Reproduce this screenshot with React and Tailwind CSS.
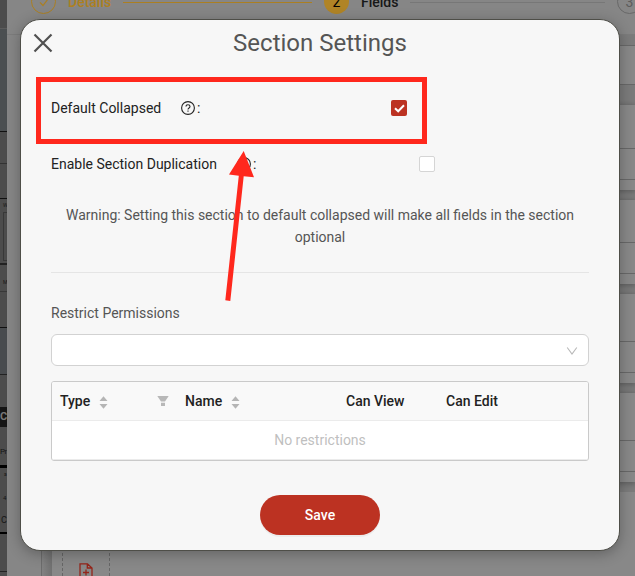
import React from 'react';

function SideStrip() {
  return (
    <div className="flex w-[7px] shrink-0 flex-col overflow-hidden bg-[#4c4c4c] text-[9px] leading-none text-[#161616]">
      <div className="h-[29px] shrink-0 border-b border-[#5c5c5c]" />
      <div className="h-[91px] shrink-0 border-b border-[#4b4f51] bg-[#4b4f51]" />
      <div className="h-3 shrink-0 border-b border-[#111] bg-[#4b4f51]" />
      <div className="h-8 shrink-0 border-b border-[#333]" />
      <div className="h-[35px] shrink-0 border-b border-[#111]" />
      <div className="h-[13px] shrink-0 pl-[3px] pt-1 text-[5px]">W</div>
      <div className="ml-[3px] h-[49px] shrink-0 border border-r-0 border-[#383838]" />
      <div className="mt-[2px] h-[2px] shrink-0 bg-[#222]" />
      <div className="h-[27px] shrink-0 border-b border-[#383838] pl-[3px] pt-[15px] text-[5px]">M</div>
      <div className="h-9 shrink-0 border-b border-[#111]" />
      <div className="h-[47px] shrink-0 border-b border-[#222] bg-[#484b4e]" />
      <div className="mt-8 h-5 shrink-0 bg-[#151515] pt-1 text-[11px] font-bold text-[#777]">C</div>
      <div className="h-[38px] shrink-0 pt-[21px] text-[8px] tracking-[-0.5px]">Pr</div>
      <div className="h-[3px] shrink-0 bg-black" />
      <div className="h-[27px] shrink-0 pl-1 pt-1 text-[5px]">a</div>
      <div className="h-[20px] shrink-0 pl-[3px] text-[6px]">4</div>
      <div className="h-[17px] shrink-0 pl-px pt-[1px]">C</div>
      <div className="h-[2px] shrink-0 bg-black" />
      <div className="h-[38px] shrink-0 border-b border-[#222]" />
    </div>
  );
}

function Stepper() {
  return (
    <div className="-mt-[11px] flex h-[25px] shrink-0 items-center pl-6 text-[14px] font-medium">
      <span className="flex size-[25px] shrink-0 items-center justify-center rounded-full border border-[#ab7f22]">
        <svg className="size-3" viewBox="0 0 12 12" fill="none" stroke="#ab7f22" strokeWidth="1.2">
          <path d="M2 6.3 5 9.5 10 3" />
        </svg>
      </span>
      <span className="ml-3 w-[43px] shrink-0 text-[#ae8020]">Details</span>
      <span className="ml-3 mt-[2px] h-px w-[189px] shrink-0 bg-[#ab7f22]" />
      <span className="ml-3 flex size-[25px] shrink-0 items-center justify-center rounded-full bg-[#b08426] font-normal text-black">2</span>
      <span className="ml-3 w-[38px] shrink-0 text-[#171717]">Fields</span>
      <span className="ml-[11px] mt-[2px] h-px w-[195px] shrink-0 bg-[#777]" />
      <span className="ml-3 flex size-[25px] shrink-0 items-center justify-center rounded-full border border-[#686868] font-normal text-[#5c5c5c]">3</span>
    </div>
  );
}

function FieldCard({ className }) {
  return (
    <div className={'flex shrink-0 flex-col bg-[#888] shadow-[0_1px_5px_1px_rgba(0,0,0,0.22)] ' + className}>
      <div className="flex-1 border-b border-[#686868]" />
      <div className="h-[31px] border-b border-[#686868]" />
      <div className="h-[10px]" />
    </div>
  );
}

function Backdrop() {
  return (
    <div className="flex h-full">
      <SideStrip />
      <div className="flex min-w-0 flex-1 flex-col overflow-hidden bg-[#868686]">
        <Stepper />
        <div className="h-[21px] shrink-0 border-b border-[#7c7c7c]" />
        <div className="flex min-h-0 flex-1">
          <div className="flex w-[35px] shrink-0 border-r border-[#6c6c6c]" />
          <div className="w-[10px] shrink-0 bg-linear-to-r from-[#828282] to-[#707070]" />
          <div className="flex flex-1 items-end bg-[#888] pl-[10px]">
            <div className="flex h-12 w-12 justify-center border-x border-dashed border-[#666] pt-[35px]">
              <svg className="h-[18px] w-[14px] shrink-0" viewBox="0 0 14 18" fill="none" stroke="#94251a" strokeWidth="1.3">
                <path d="M1 .8h7.5L13 5v12H1zM8.3.8V5H13M4 9.5h6M7 6.5v6" />
              </svg>
            </div>
          </div>
          <div className="flex w-[30px] shrink-0 flex-col gap-[10px] overflow-hidden bg-[#7b7b7b]">
            <div className="mt-[10px] h-10 shrink-0 border-y border-[#686868] bg-[#888]" />
            <FieldCard className="mt-[10px] h-[85px]" />
            <FieldCard className="h-[84px]" />
            <FieldCard className="h-[89px]" />
            <FieldCard className="h-[89px]" />
            <div className="flex-1 bg-[#888]" />
          </div>
        </div>
      </div>
    </div>
  );
}

function HelpIcon() {
  return (
    <svg className="size-[14px] shrink-0" viewBox="0 0 14 14" fill="none" stroke="#222" strokeWidth="1.1">
      <circle cx="7" cy="7" r="6.4" />
      <path d="M5 5.6C5 4.4 5.8 3.7 7 3.7s2 .7 2 1.8c0 1.5-2 1.4-2 3" />
      <path d="M7 9.5v1.2" />
    </svg>
  );
}

function Sorter() {
  return (
    <svg className="mt-[3px] h-[13px] w-[9px] shrink-0" viewBox="0 0 9 13" fill="#b5b5b5">
      <path d="M4.5.3 8.5 5H.5zM4.5 12.7.5 8h8z" />
    </svg>
  );
}

function Modal() {
  return (
    <div className="absolute left-5 top-[19px] flex h-[532px] w-[600px] flex-col rounded-[20px] border border-[#4e4e48] bg-[#f7f7f7] px-[30px] shadow-[0_3px_14px_rgba(0,0,0,0.28)]">
      <div className="-mx-[30px] flex h-[46px] shrink-0 items-center">
        <svg className="ml-3 size-5" viewBox="0 0 20 20" fill="none" stroke="#505050" strokeWidth="2.2">
          <path d="m1.5 1.5 17 17M18.5 1.5l-17 17" />
        </svg>
        <h1 className="mr-8 flex-1 text-center text-[24px] text-[#555]">Section Settings</h1>
      </div>
      <div className="mt-[14px] flex h-14 shrink-0 items-center">
        <span className="w-[130px]">Default Collapsed</span>
        <HelpIcon />
        <span className="ml-[2px]">:</span>
        <span className="ml-auto mr-[182px] flex size-4 items-center justify-center rounded-[2px] bg-[#bc3222]">
          <svg className="h-[9px] w-[11px]" viewBox="0 0 11 9" fill="none" stroke="#fff" strokeWidth="2">
            <path d="M1 4.2 4.2 7.3 10 1.2" />
          </svg>
        </span>
      </div>
      <div className="flex h-14 shrink-0 items-center">
        <span className="w-[186px]">Enable Section Duplication</span>
        <HelpIcon />
        <span className="ml-[2px]">:</span>
        <span className="ml-auto mr-[154px] size-4 rounded-[2px] border border-[#d5d5d5] bg-white" />
      </div>
      <p className="mt-3 shrink-0 text-center leading-[22px] text-[#555]">
        Warning: Setting this section to default collapsed will make all fields in the section optional
      </p>
      <div className="mt-6 h-px shrink-0 bg-[#e5e5e5]" />
      <div className="mt-[29px] h-[22px] shrink-0 leading-[22px] text-[#555]">Restrict Permissions</div>
      <div className="mt-[10px] flex h-8 shrink-0 items-center justify-end rounded-[6px] border border-[#d2d2d2] bg-white pr-[10px]">
        <svg className="mt-px h-2 w-3" viewBox="0 0 12 8" fill="none" stroke="#b8b8b8" strokeWidth="1.1">
          <path d="M1.2.5 6 7 10.8.5" />
        </svg>
      </div>
      <div className="mt-[15px] h-20 shrink-0 overflow-hidden rounded-[3px] border border-[#cacaca] bg-white">
        <div className="flex h-[39px] items-center border-b border-[#ebebeb] bg-[#f9f9f9] pl-2 font-medium">
          <div className="flex w-[125px] items-center">
            <span className="w-[39px]">Type</span>
            <Sorter />
            <svg className="ml-auto mr-4 h-[10px] w-3" viewBox="0 0 12 10" fill="#b8b8b8">
              <path d="M.3 0h11.4L8 5.5H4zM4 6.8h4V10H4z" />
            </svg>
          </div>
          <div className="flex w-[161px] items-center">
            <span className="w-[46px]">Name</span>
            <Sorter />
          </div>
          <span className="w-[100px]">Can View</span>
          <span>Can Edit</span>
        </div>
        <div className="flex h-[39px] items-center justify-center border-b border-[#ebebeb] text-[#bfbfbf]">No restrictions</div>
      </div>
      <button className="mt-[34px] h-10 w-[120px] shrink-0 self-center rounded-full bg-[#bc3222] font-medium text-white shadow-[0_2px_0_rgba(0,0,0,0.045)]">
        Save
      </button>
    </div>
  );
}

export default function App() {
  return (
    <div className="relative h-[576px] w-[635px] overflow-hidden bg-[#868686] font-['Roboto',sans-serif] text-[14px] leading-[22px] text-[#222]">
      <Backdrop />
      <Modal />
      <div className="absolute left-9 top-[77px] h-[67px] w-[391px] border-[5px] border-[#ff281d]" />
      <svg className="absolute left-[220px] top-[148px] h-[156px] w-[40px]" viewBox="220 148 40 156" fill="#ff281d">
        <path d="M243.7 151 254 177.2 243.7 176.2 230.3 301 225.3 300.2 238.8 175.7 229 174.5Z" />
      </svg>
    </div>
  );
}
